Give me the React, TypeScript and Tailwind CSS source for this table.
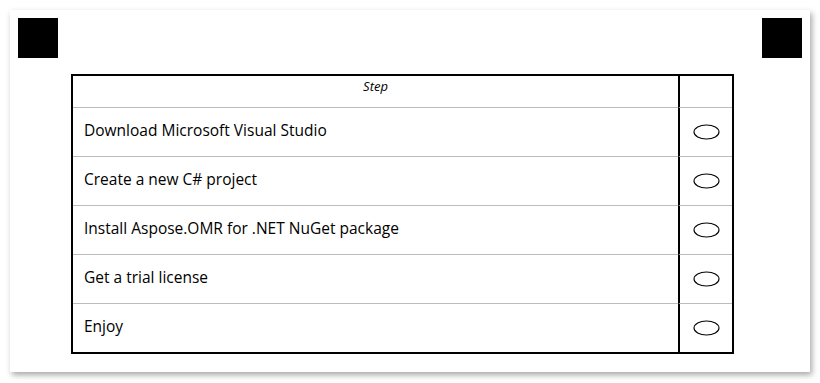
const steps = [
  'Download Microsoft Visual Studio',
  'Create a new C# project',
  'Install Aspose.OMR for .NET NuGet package',
  'Get a trial license',
  'Enjoy',
];

function Bubble() {
  return (
    <svg width="27" height="16" viewBox="0 0 27 16" className="block">
      <ellipse cx="13.5" cy="8" rx="12.5" ry="7" fill="none" stroke="#000" strokeWidth="1.1" />
    </svg>
  );
}

export default function App() {
  return (
    <div className="min-h-[383px] w-[820px] bg-white p-[10px] font-['Open_Sans','Noto_Sans',sans-serif] text-black">
      <div className="h-[362px] w-[800px] bg-white shadow-[2px_3px_6px_rgba(0,0,0,0.35)]">
        <div className="flex justify-between px-[8px] pt-[8px]">
          <div className="h-[40px] w-[40px] bg-black" />
          <div className="h-[40px] w-[40px] bg-black" />
        </div>

        <div className="ml-[61px] mt-[16px] w-[663px] border-2 border-black">
          <div className="grid grid-cols-[1fr_54px]">
            <div className="h-[32px] border-b border-[#bcbcbc] pt-[2px] text-center text-[13px] italic leading-[16px]">
              Step
            </div>
            <div className="h-[32px] border-b border-l-2 border-b-[#bcbcbc] border-l-black" />

            {steps.map((step, i) => {
              const last = i === steps.length - 1;
              return (
                <div key={step} className="contents">
                  <div
                    className={`flex items-center pb-[3px] pl-[11px] text-[15.5px] ${
                      last ? 'h-[48px]' : 'h-[49px] border-b border-[#bcbcbc]'
                    }`}
                  >
                    {step}
                  </div>
                  <div
                    className={`flex items-center justify-center border-l-2 border-l-black ${
                      last ? 'h-[48px]' : 'h-[49px] border-b border-b-[#bcbcbc]'
                    }`}
                  >
                    <Bubble />
                  </div>
                </div>
              );
            })}
          </div>
        </div>
      </div>
    </div>
  );
}
